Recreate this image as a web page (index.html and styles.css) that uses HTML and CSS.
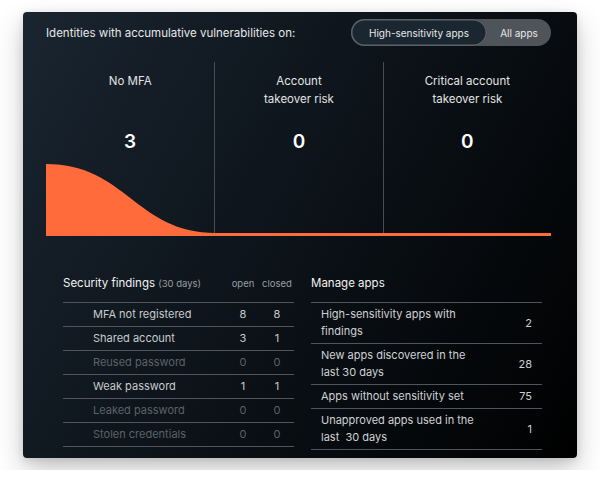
FILE: index.html
```html
<!DOCTYPE html>
<html lang="en">
<head>
  <meta charset="UTF-8">
  <meta name="viewport" content="width=device-width, initial-scale=1.0">
  <title>Identity vulnerabilities</title>
  <link rel="stylesheet" href="styles.css">
</head>
<body>

  <div class="card">
    <div class="topo">
      <span class="titulo">Identities with accumulative vulnerabilities on:</span>
      <div class="toggle">
        <button class="ativo">High-sensitivity apps</button>
        <button>All apps</button>
      </div>
    </div>

    <div class="stats">
      <div class="stat">
        <div class="rotulo">No MFA</div>
        <div class="numero">3</div>
      </div>
      <div class="stat">
        <div class="rotulo">Account<br>takeover risk</div>
        <div class="numero">0</div>
      </div>
      <div class="stat">
        <div class="rotulo">Critical account<br>takeover risk</div>
        <div class="numero">0</div>
      </div>
      <svg class="grafico" viewBox="0 0 505 72" preserveAspectRatio="none">
        <path d="M0 0 C80 0 90 69 170 69 H505 V72 H0 Z" fill="#ff6b3b"/>
      </svg>
    </div>

    <div class="detalhes">
      <div class="findings">
        <div class="cab">
          <span class="cab-titulo">Security findings <small>(30 days)</small></span>
          <span class="col">open</span>
          <span class="col">closed</span>
        </div>
        <div id="lista-findings"></div>
      </div>

      <div class="apps">
        <div class="cab">
          <span class="cab-titulo">Manage apps</span>
        </div>
        <div id="lista-apps"></div>
      </div>
    </div>
  </div>

  <script>
    const findings = [
      { nome: "MFA not registered", aberto: 8, fechado: 8 },
      { nome: "Shared account", aberto: 3, fechado: 1 },
      { nome: "Reused password", aberto: 0, fechado: 0 },
      { nome: "Weak password", aberto: 1, fechado: 1 },
      { nome: "Leaked password", aberto: 0, fechado: 0 },
      { nome: "Stolen credentials", aberto: 0, fechado: 0 },
    ];

    const apps = [
      { nome: "High-sensitivity apps with findings", valor: 2 },
      { nome: "New apps discovered in the last 30 days", valor: 28 },
      { nome: "Apps without sensitivity set", valor: 75 },
      { nome: "Unapproved apps used in the last&nbsp; 30 days", valor: 1 },
    ];

    const listaFindings = document.getElementById("lista-findings");
    findings.forEach(f => {
      const row = document.createElement("div");
      row.className = "linha" + (f.aberto + f.fechado === 0 ? " vazio" : "");
      row.innerHTML = `
        <span>${f.nome}</span>
        <span class="col">${f.aberto}</span>
        <span class="col">${f.fechado}</span>
      `;
      listaFindings.appendChild(row);
    });

    const listaApps = document.getElementById("lista-apps");
    apps.forEach(a => {
      const row = document.createElement("div");
      row.className = "linha";
      row.innerHTML = `<span class="nome">${a.nome}</span><span class="valor">${a.valor}</span>`;
      listaApps.appendChild(row);
    });
  </script>
</body>
</html>
```

FILE: styles.css
```css
body {
  font-family: Inter, "Liberation Sans", sans-serif;
  margin: 0;
  padding: 12px 23px;
  background: #fff;
}

.card {
  background: linear-gradient(120deg, #1a2530 0%, #0d141b 45%, #000 100%);
  border-radius: 4px;
  padding: 7px 26px 8px 23px;
  box-shadow: 0 12px 28px rgba(0, 0, 0, 0.22), 0 2px 8px rgba(0, 0, 0, 0.12);
  color: #e4e4e4;
  height: 446px;
  box-sizing: border-box;
}

.topo {
  display: flex;
  justify-content: space-between;
  align-items: center;
  height: 27px;
}

.titulo {
  font-size: 11.5px;
  color: #e8e8e8;
}

.toggle {
  display: flex;
  background: #4f545b;
  border-radius: 14px;
  height: 27px;
  width: 200px;
}

.toggle button {
  font-family: inherit;
  font-size: 10px;
  border: none;
  background: none;
  color: #e8e8e8;
  border-radius: 14px;
  white-space: nowrap;
  flex: 1;
  padding: 0;
  cursor: pointer;
}

.toggle .ativo {
  background: #1b2730;
  box-shadow: 0 0 0 1.5px #5c6168 inset;
  flex: 0 0 136px;
}

.stats {
  display: grid;
  grid-template-columns: repeat(3, 1fr);
  margin-top: 16px;
  height: 174px;
}

.stat {
  grid-row: 1;
  text-align: center;
  padding-top: 11px;
  height: 171px;
  box-sizing: border-box;
}

.stat:nth-child(1) { grid-column: 1; }
.stat:nth-child(2) { grid-column: 2; }
.stat:nth-child(3) { grid-column: 3; }

.stat + .stat {
  border-left: 1px solid #474c52;
}

.rotulo {
  font-size: 11.5px;
  line-height: 17.5px;
  height: 35px;
  color: #e4e4e4;
}

.numero {
  font-size: 19px;
  font-weight: 600;
  color: #fff;
  margin-top: 22px;
}

.grafico {
  grid-row: 1;
  grid-column: 1 / 4;
  align-self: end;
  width: 100%;
  height: 72px;
  display: block;
}

.detalhes {
  display: grid;
  grid-template-columns: 231px 231px;
  gap: 17px;
  margin: 40px 0 0 17px;
}

.cab {
  display: grid;
  grid-template-columns: 1fr 34px 34px;
  align-items: baseline;
  padding-bottom: 12px;
  border-bottom: 1px solid #50555b;
}

.cab-titulo {
  font-size: 11.5px;
  color: #f2f2f2;
}

.cab-titulo small {
  font-size: 9.5px;
  color: #9a9ea3;
}

.cab .col {
  font-size: 9.5px;
  color: #9a9ea3;
  text-align: center;
}

.findings .linha {
  display: grid;
  grid-template-columns: 1fr 34px 34px;
  padding: 3px 0 3px 30px;
  line-height: 17px;
  font-size: 11px;
  color: #c9cbcd;
  border-bottom: 1px solid #50555b;
}

.findings .linha .col {
  text-align: center;
}

.findings .vazio {
  color: #5d6267;
}

.apps .linha {
  display: flex;
  justify-content: space-between;
  align-items: center;
  padding: 3px 10px;
  line-height: 17px;
  font-size: 11px;
  color: #cfd1d3;
  border-bottom: 1px solid #50555b;
}

.apps .nome {
  max-width: 165px;
}
```
